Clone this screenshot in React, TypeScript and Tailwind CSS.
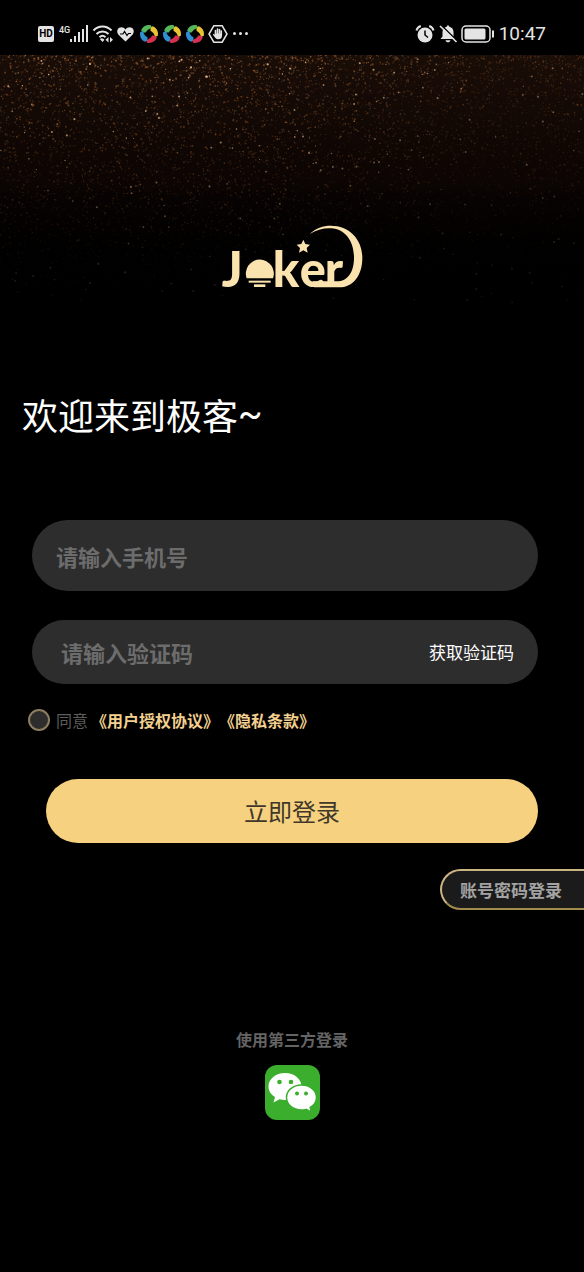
import type { ReactNode } from 'react';

interface Speck {
	x: number;
	y: number;
	r: number;
	color: string;
	opacity: number;
}

const GLITTER_WIDTH = 584;
const GLITTER_HEIGHT = 250;
const GLITTER_COLORS = ['#8a4b1e', '#a3622c', '#6b3a1c', '#7d5a3c', '#5a4434'];

// fixed seed so the glitter does not jump between renders
const createGlitter = (count: number): Speck[] => {
	let seed = 20471;
	const random = () => {
		seed = (seed * 16807) % 2147483647;
		return seed / 2147483647;
	};

	return Array.from({ length: count }, () => {
		const x = random() * GLITTER_WIDTH;
		const depth = Math.pow(random(), 1.25);
		const side = 1 - 0.5 * Math.min(1, Math.max(0, (x - 280) / 200));
		const fade = Math.pow(1 - depth, 1.3) * side;
		const bright = random() > 0.975;

		return {
			x,
			y: depth * GLITTER_HEIGHT,
			r: bright ? 0.5 + random() * 0.6 : 0.4 + random() * 0.6,
			color: bright
				? '#e2b78a'
				: GLITTER_COLORS[Math.floor(random() * GLITTER_COLORS.length)],
			opacity: bright ? 0.1 + fade * 0.9 : fade * (0.3 + random() * 0.7),
		};
	});
};

const glitter = createGlitter(9500);

const Glitter = () => (
	<svg
		className="absolute inset-0 h-full w-full"
		viewBox={`0 0 ${GLITTER_WIDTH} ${GLITTER_HEIGHT}`}
		preserveAspectRatio="xMidYMin slice"
		aria-hidden="true"
	>
		{glitter.map((speck, index) => (
			<circle
				key={index}
				cx={speck.x.toFixed(1)}
				cy={speck.y.toFixed(1)}
				r={speck.r.toFixed(2)}
				fill={speck.color}
				opacity={speck.opacity.toFixed(2)}
			/>
		))}
	</svg>
);

const SignalIcon = () => (
	<svg className="h-5 w-5" viewBox="0 0 20 20" fill="currentColor">
		<rect x="0" y="15" width="2" height="3" />
		<rect x="4" y="12" width="2" height="6" />
		<rect x="8" y="8" width="2" height="10" />
		<rect x="12" y="5" width="2" height="13" />
		<rect x="16" y="1" width="2" height="17" />
	</svg>
);

const WifiIcon = () => (
	<svg className="h-5 w-5" viewBox="0 0 20 20" fill="none" stroke="currentColor" strokeWidth="2">
		<path d="M.500 6.500C5.500 1.200 13.500 1.200 18.500 6.500" />
		<path d="M3.500 10c3.400-3.500 8.600-3.500 12 0" />
		<path d="M6.500 13.200c1.800-1.700 4.200-1.700 6 0" />
		<path d="M6.800 15 9.500 18l2-2.200A3.500 3.500 0 0 0 6.800 15Z" fill="currentColor" stroke="none" />
		<path d="m15.500 13-3 2.800 3 2.800Zm1.500 0v5.600l3-2.800Z" fill="currentColor" stroke="none" />
	</svg>
);

const HeartIcon = () => (
	<svg className="h-5 w-5" viewBox="0 0 20 20">
		<path
			d="M9.500 17.500 2.500 10.700C.500 8.300 1 5 3.300 3.700 5.500 2.500 8 3.300 9.500 5.400c1.500-2.100 4-2.900 6.200-1.700 2.300 1.300 2.800 4.600.8 7Z"
			fill="currentColor"
		/>
		<path d="M4 10h3L8.500 7.500l2.500 4 1.500-2H15" fill="none" stroke="#000" strokeWidth="1.200" />
	</svg>
);

const BALL_PETALS = ['#56b85a', '#e8c433', '#d62f50', '#2f8fd0'];

const BallIcon = () => (
	<svg className="h-5 w-5" viewBox="0 0 20 20">
		{BALL_PETALS.map((color, index) => (
			<path
				key={color}
				d="M1.800 7.500C2.500 3.500 6 .800 10.500 1L12.500 3.800C10 4.200 8 5.500 6.500 9 4.500 9.500 3 9 1.800 7.500Z"
				fill={color}
				transform={`rotate(${index * 90 + 8} 10 10)`}
			/>
		))}
	</svg>
);

const HandIcon = () => (
	<svg className="h-5 w-5" viewBox="0 0 20 20" fill="none" stroke="currentColor">
		<path d="M5.800 1.800h8.400L19 10l-4.800 8.200H5.800L1 10Z" strokeWidth="1.500" />
		<path d="M7.500 11V6.500M9.500 10V5M11.500 10V5.500M13.300 11V7" strokeWidth="1.600" strokeLinecap="round" />
		<path
			d="M6.800 9.500h7.200V12c0 2-1.500 3.300-3.400 3.300-2 0-3-.8-4-2.300L4.800 10.500c.4-.8 1.200-.5 2 .5Z"
			fill="currentColor"
			stroke="none"
		/>
	</svg>
);

const AlarmIcon = () => (
	<svg className="h-5 w-5" viewBox="0 0 20 20">
		<circle cx="10" cy="11" r="7.500" fill="currentColor" />
		<path d="M1.500 6.500C2 4.200 3.600 2.700 5.800 2M18.500 6.500C18 4.200 16.400 2.700 14.200 2" fill="none" stroke="currentColor" strokeWidth="2" />
		<path d="M10 6.500V11l3 2.500" fill="none" stroke="#000" strokeWidth="1.500" />
	</svg>
);

const BellOffIcon = () => (
	<svg className="h-5 w-5" viewBox="0 0 20 20">
		<path
			d="M10 1.500c.8 0 1.300.5 1.300 1.300 2.700.6 4.200 2.600 4.200 5.200v4.500l2 2.500H2.500l2-2.500V8c0-2.600 1.500-4.600 4.200-5.200 0-.8.5-1.300 1.300-1.300Z"
			fill="currentColor"
		/>
		<path d="M7.500 16.200h5c-.5 1.400-1.300 2-2.500 2s-2-.6-2.500-2Z" fill="currentColor" />
		<path d="M3.500 1.500 19.500 17" stroke="#000" strokeWidth="1.500" />
		<path d="m2 2 16.500 16" stroke="currentColor" strokeWidth="1.600" />
	</svg>
);

const BatteryIcon = () => (
	<svg className="h-5 w-[34px]" viewBox="0 0 34 20">
		<rect x="1" y="2" width="28" height="16" rx="4" fill="none" stroke="currentColor" strokeWidth="1.500" />
		<rect x="3.500" y="4.500" width="21" height="11" rx="1.500" fill="currentColor" />
		<path d="M32 6.500v7" stroke="currentColor" strokeWidth="2" />
	</svg>
);

const StatusBar = () => (
	<div className="flex h-[55px] items-center justify-between bg-black pt-3 pr-[38px] pl-[38px] text-[#e4e4e4]">
		<div className="flex items-center gap-[3px]">
			<span className="flex h-4 w-4 items-center justify-center rounded-xs bg-[#e4e4e4] font-['Roboto',sans-serif] text-[10px] leading-4 font-bold text-black">
				HD
			</span>
			<div className="flex items-start pl-[2px]">
				<span className="font-['Roboto',sans-serif] text-[9px] leading-3 font-medium">4G</span>
				<SignalIcon />
			</div>
			<WifiIcon />
			<HeartIcon />
			<BallIcon />
			<BallIcon />
			<BallIcon />
			<HandIcon />
			<span className="flex gap-[3px] pl-[2px]">
				<i className="h-[3px] w-[3px] rounded-full bg-current" />
				<i className="h-[3px] w-[3px] rounded-full bg-current" />
				<i className="h-[3px] w-[3px] rounded-full bg-current" />
			</span>
		</div>
		<div className="flex items-center gap-[3px]">
			<AlarmIcon />
			<BellOffIcon />
			<BatteryIcon />
			<span className="pl-px font-['Roboto',sans-serif] text-[19px] leading-6">10:47</span>
		</div>
	</div>
);

const Logo = () => (
	<svg className="h-[85px] w-[165px]" viewBox="0 0 495 255" fill="#fbe3b0" role="img" aria-label="Joker">
		<g fontFamily="Lato, sans-serif" fontSize="146" fontWeight="900">
			<text x="35" y="215">J</text>
			<text x="188" y="215">k</text>
			<text x="269" y="215">e</text>
			<text x="344" y="215">r</text>
		</g>
		<path d="M110 190a42 42 0 1 1 79 0Z" />
		<rect x="116" y="197" width="66" height="6" />
		<rect x="132" y="208" width="34" height="8" />
		<path d="m280 74 6 13 14 2-10 10 3 14-13-7-13 7 3-14-10-10 14-2Z" />
		<path d="M299 57C318 39 339 32 362 32c57 0 95 42 95 96 0 54-28 89-70 89h-75l-4-18h72c34 0 52-29 52-71 0-48-24-85-69-88-24-1-43 5-64 17Z" />
	</svg>
);

const WechatIcon = () => (
	<svg className="h-[55px] w-[55px]" viewBox="0 0 55 55" aria-hidden="true">
		<rect width="55" height="55" rx="12" fill="#3bae2e" />
		<path
			d="M20 8C10.500 8 3.500 14 3.500 21.500c0 4.500 2.500 8 6.500 10.500l-1.500 5.500 6-3.200c1.800.5 3.600.7 5.500.7 9.500 0 16.500-6 16.500-13.500S29.500 8 20 8Z"
			fill="#fff"
		/>
		<path
			d="M36.500 20C28 20 21.500 25.500 21.500 32.500S28 45 36.500 45c1.700 0 3.300-.2 4.800-.6l5.200 2.800-1.300-4.700c3.800-2.300 6.300-5.800 6.300-10C51.500 25.500 45 20 36.500 20Z"
			fill="#fff"
			stroke="#3bae2e"
			strokeWidth="1.500"
		/>
		<g fill="#3bae2e">
			<circle cx="14.500" cy="17" r="2.300" />
			<circle cx="26" cy="17" r="2.300" />
			<circle cx="32" cy="28.500" r="2" />
			<circle cx="41" cy="28.500" r="2" />
		</g>
	</svg>
);

interface AgreementLinkProps {
	children: ReactNode;
}

const AgreementLink = ({ children }: AgreementLinkProps) => (
	<a href="#" className="font-bold text-[#f3d08f]">
		{children}
	</a>
);

const App = () => {
	return (
		<div className="min-h-screen bg-black font-['Noto_Sans_CJK_SC',sans-serif] text-white">
			<StatusBar />
			<header className="relative flex h-[250px] items-end justify-center bg-linear-to-b from-[#190d07] via-[#0c0503] to-black pb-[5px]">
				<Glitter />
				<div className="relative">
					<Logo />
				</div>
			</header>

			<main className="pt-[85px]">
				<h1 className="flex h-12 pl-[22px] text-4xl leading-12">
					欢迎来到极客<span className="font-['Roboto',sans-serif]">~</span>
				</h1>

				<form className="pt-[82px]" onSubmit={(e) => e.preventDefault()}>
					<div className="flex flex-col gap-[29px] pr-[46px] pl-8">
						<input
							type="tel"
							aria-label="手机号"
							placeholder="请输入手机号"
							className="h-[71px] w-full rounded-full bg-[#2d2d2d] px-6 text-[22px] font-bold outline-none placeholder:text-[#6c6c6c]"
						/>
						<div className="flex h-16 items-center rounded-full bg-[#2d2d2d] pr-6 pl-[29px]">
							<input
								type="text"
								aria-label="验证码"
								placeholder="请输入验证码"
								className="min-w-0 flex-1 text-[22px] font-bold outline-none placeholder:text-[#6c6c6c]"
							/>
							<button type="button" className="text-[17px] leading-6">
								获取验证码
							</button>
						</div>
					</div>

					<div className="flex items-center pt-6 pl-7 text-base leading-6">
						<input
							id="agree"
							type="checkbox"
							className="h-[22px] w-[22px] appearance-none rounded-full border-2 border-[#8c7d60] bg-[#2d2d2d] checked:bg-[#f6d17f]"
						/>
						<label htmlFor="agree" className="pr-[3px] pl-1.5 text-[#5c5c5c]">
							同意
						</label>
						<AgreementLink>《用户授权协议》</AgreementLink>
						<AgreementLink>《隐私条款》</AgreementLink>
					</div>

					<div className="pt-[47px] pr-[46px] pl-[46px]">
						<button
							type="submit"
							className="h-16 w-full rounded-full bg-[#f6d17f] text-2xl text-[#40372a]"
						>
							立即登录
						</button>
					</div>
				</form>

				<div className="flex justify-end pt-[26px]">
					<button
						type="button"
						className="h-[41px] rounded-l-full border-2 border-r-0 border-[#cdb483] border-b-[#a08c4c] bg-[#1b1b1b] pr-[22px] pl-[18px] text-[17px] font-bold text-[#a3a3a3]"
					>
						账号密码登录
					</button>
				</div>

				<section className="flex flex-col items-center gap-[14px] pt-[117px]">
					<h2 className="text-base leading-6 font-bold text-[#646464]">使用第三方登录</h2>
					<button type="button" aria-label="微信登录">
						<WechatIcon />
					</button>
				</section>
			</main>
		</div>
	);
};

export default App;
